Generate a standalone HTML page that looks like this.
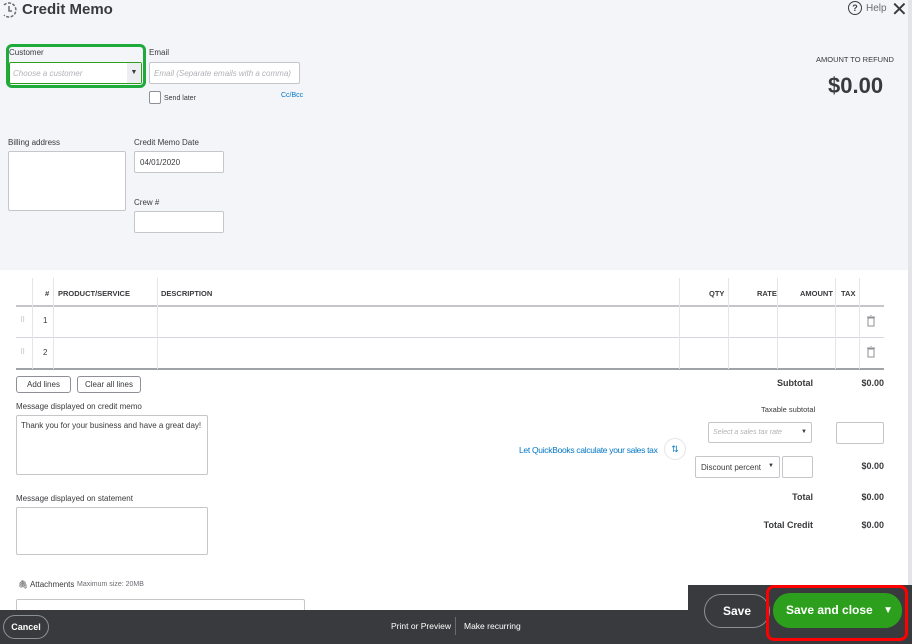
<!DOCTYPE html><html><head><style>
*{box-sizing:border-box;margin:0;padding:0}
body{width:912px;height:644px;position:relative;overflow:hidden;background:#fff;font-family:"Liberation Sans",sans-serif;color:#393a3d;font-size:8px}
.a{position:absolute}
.inp{position:absolute;background:#fff;border:1px solid #c4c6ca;border-radius:2px}
.lbl{position:absolute;font-size:8px;color:#393a3d}
.btn{position:absolute;border:1px solid #8d9096;border-radius:3px;background:#fff;font-size:8px;text-align:center;line-height:15px}
.th{position:absolute;top:289px;font-size:7.5px;font-weight:bold}
.vl{position:absolute;width:1px;background:#e3e5e8}
.r{position:absolute;font-size:9px;text-align:right;font-weight:bold}
</style></head><body>
<div class="a" style="left:0;top:0;width:912px;height:270px;background:#f4f5f8"></div>
<div class="a" style="left:908px;top:0;width:4px;height:610px;background:#e3e5e8"></div>
<svg class="a" style="left:1px;top:1px" width="16" height="18" viewBox="0 0 16 18"><path d="M3 4A7 7 0 1 1 3 14" fill="none" stroke="#6b6c72" stroke-width="1.5" stroke-dasharray="3 1.5"/><path d="M8 5v5h3" fill="none" stroke="#6b6c72" stroke-width="1.5"/></svg>
<div class="a" style="left:22px;top:1px;font-size:15px;font-weight:bold">Credit Memo</div>
<div class="a" style="left:848px;top:1px;width:14px;height:14px;border:1.3px solid #393a3d;border-radius:50%;font-size:9px;text-align:center;line-height:12px;font-weight:bold">?</div>
<div class="a" style="left:866px;top:3px;font-size:10px;color:#6b6c72">Help</div>
<div class="a" style="left:891px;top:-3px;font-size:20px;color:#393a3d">✕</div>
<div class="a" style="left:6px;top:44px;width:140px;height:44px;border:3px solid #1faa3c;border-radius:6px"></div>
<div class="lbl" style="left:9px;top:48px">Customer</div>
<div class="inp" style="left:9px;top:62px;width:133px;height:22px;border-color:#2ca01c"><span class="a" style="left:3px;top:6px;color:#b0b2b6;font-style:italic">Choose a customer</span><div class="a" style="right:0;top:0;width:14px;height:20px;background:#eceef1;font-size:7px;text-align:center;line-height:20px">▼</div></div>
<div class="lbl" style="left:149px;top:48px">Email</div>
<div class="inp" style="left:149px;top:62px;width:151px;height:22px"><span class="a" style="left:4px;top:6px;color:#b0b2b6;font-style:italic">Email (Separate emails with a comma)</span></div>
<div class="inp" style="left:149px;top:91px;width:12px;height:13px;border-color:#8d9096"></div>
<div class="lbl" style="left:164px;top:95px;font-size:7px">Send later</div>
<div class="lbl" style="left:281px;top:92px;font-size:7px;color:#0077c5">Cc/Bcc</div>
<div class="lbl" style="left:816px;top:55px;font-size:7.5px">AMOUNT TO REFUND</div>
<div class="a" style="left:828px;top:73px;font-size:22px;font-weight:bold">$0.00</div>
<div class="lbl" style="left:8px;top:138px">Billing address</div>
<div class="inp" style="left:8px;top:151px;width:118px;height:60px"></div>
<div class="lbl" style="left:134px;top:138px">Credit Memo Date</div>
<div class="inp" style="left:134px;top:151px;width:90px;height:22px"><span class="a" style="left:5px;top:6px">04/01/2020</span></div>
<div class="lbl" style="left:134px;top:198px">Crew #</div>
<div class="inp" style="left:134px;top:211px;width:90px;height:22px"></div>
<div class="th" style="left:45px">#</div>
<div class="th" style="left:58px">PRODUCT/SERVICE</div>
<div class="th" style="left:161px">DESCRIPTION</div>
<div class="th" style="left:709px">QTY</div>
<div class="th" style="left:757px">RATE</div>
<div class="th" style="left:800px">AMOUNT</div>
<div class="th" style="left:841px">TAX</div>
<div class="a" style="left:16px;top:305px;width:868px;height:2px;background:#c4c6ca"></div>
<div class="a" style="left:16px;top:337px;width:868px;height:1px;background:#d4d7dc"></div>
<div class="a" style="left:16px;top:368px;width:868px;height:2px;background:#a0a3a8"></div>
<div class="vl" style="left:32px;top:278px;height:91px"></div>
<div class="vl" style="left:53px;top:278px;height:91px"></div>
<div class="vl" style="left:157px;top:278px;height:91px"></div>
<div class="vl" style="left:679px;top:278px;height:91px"></div>
<div class="vl" style="left:728px;top:278px;height:91px"></div>
<div class="vl" style="left:777px;top:278px;height:91px"></div>
<div class="vl" style="left:835px;top:278px;height:91px"></div>
<div class="vl" style="left:859px;top:278px;height:91px"></div>
<div class="a" style="left:20px;top:316px;font-size:7px;color:#aaa">⠿</div>
<div class="a" style="left:43px;top:316px">1</div>
<div class="a" style="left:20px;top:348px;font-size:7px;color:#aaa">⠿</div>
<div class="a" style="left:43px;top:348px">2</div>
<svg class="a" style="left:867px;top:315px" width="8" height="12"><rect x="1" y="3" width="6" height="8" fill="none" stroke="#8d9096"/><path d="M0 2h8M3 0h2" stroke="#8d9096"/></svg>
<svg class="a" style="left:867px;top:346px" width="8" height="12"><rect x="1" y="3" width="6" height="8" fill="none" stroke="#8d9096"/><path d="M0 2h8M3 0h2" stroke="#8d9096"/></svg>
<div class="btn" style="left:16px;top:376px;width:55px;height:17px">Add lines</div>
<div class="btn" style="left:77px;top:376px;width:64px;height:17px">Clear all lines</div>
<div class="r" style="left:740px;top:378px;width:73px">Subtotal</div>
<div class="r" style="left:820px;top:378px;width:64px">$0.00</div>
<div class="lbl" style="left:16px;top:402px">Message displayed on credit memo</div>
<div class="inp" style="left:16px;top:415px;width:192px;height:60px"><span class="a" style="left:4px;top:5px">Thank you for your business and have a great day!</span></div>
<div class="lbl" style="left:16px;top:494px">Message displayed on statement</div>
<div class="inp" style="left:16px;top:507px;width:192px;height:48px"></div>
<div class="lbl" style="left:18px;top:580px">🖇 Attachments</div>
<div class="lbl" style="left:77px;top:581px;font-size:7px;color:#6b6c72">Maximum size: 20MB</div>
<div class="inp" style="left:16px;top:599px;width:289px;height:14px"></div>
<div class="lbl" style="left:761px;top:405px;font-size:7.5px">Taxable subtotal</div>
<div class="a" style="left:519px;top:445px;font-size:8.5px;color:#0077c5;letter-spacing:-0.3px;white-space:nowrap">Let QuickBooks calculate your sales tax</div>
<div class="a" style="left:664px;top:438px;width:22px;height:22px;border-radius:50%;background:#fff;border:1px solid #e3e5e8;text-align:center;line-height:20px;color:#0077c5;font-size:9px">⇅</div>
<div class="inp" style="left:708px;top:422px;width:104px;height:21px"><span class="a" style="left:4px;top:6px;color:#b0b2b6;font-style:italic;font-size:7px">Select a sales tax rate</span><span class="a" style="right:4px;top:6px;font-size:6px">▼</span></div>
<div class="inp" style="left:836px;top:422px;width:48px;height:22px"></div>
<div class="inp" style="left:695px;top:456px;width:85px;height:22px"><span class="a" style="left:5px;top:6px">Discount percent</span><span class="a" style="right:5px;top:6px;font-size:6px">▼</span></div>
<div class="inp" style="left:782px;top:456px;width:31px;height:22px"></div>
<div class="r" style="left:820px;top:461px;width:64px">$0.00</div>
<div class="r" style="left:740px;top:492px;width:73px">Total</div>
<div class="r" style="left:820px;top:492px;width:64px">$0.00</div>
<div class="r" style="left:740px;top:520px;width:73px">Total Credit</div>
<div class="r" style="left:820px;top:520px;width:64px">$0.00</div>
<div class="a" style="left:0;top:610px;width:912px;height:34px;background:#393a3d"></div>
<div class="a" style="left:688px;top:585px;width:224px;height:59px;background:#393a3d"></div>
<div class="a" style="left:3px;top:615px;width:46px;height:24px;border:1px solid #8d9096;border-radius:12px;color:#fff;font-size:9px;font-weight:bold;text-align:center;line-height:22px">Cancel</div>
<div class="a" style="left:391px;top:621px;color:#fff;font-size:8.5px">Print or Preview</div>
<div class="a" style="left:455px;top:617px;width:1px;height:18px;background:#6b6c72"></div>
<div class="a" style="left:464px;top:621px;color:#fff;font-size:8.5px">Make recurring</div>
<div class="a" style="left:704px;top:594px;width:66px;height:34px;border:1px solid #8d9096;border-radius:17px;color:#fff;font-size:12px;font-weight:bold;text-align:center;line-height:32px">Save</div>
<div class="a" style="left:766px;top:585px;width:142px;height:56px;border:3px solid #f00;border-radius:8px"></div>
<div class="a" style="left:773px;top:593px;width:129px;height:35px;background:#2ca01c;border-radius:17px;color:#fff;font-size:12px;font-weight:bold;line-height:35px;padding-left:13px">Save and close<span class="a" style="right:9px;top:0;font-size:10px">▼</span></div>
</body></html>
